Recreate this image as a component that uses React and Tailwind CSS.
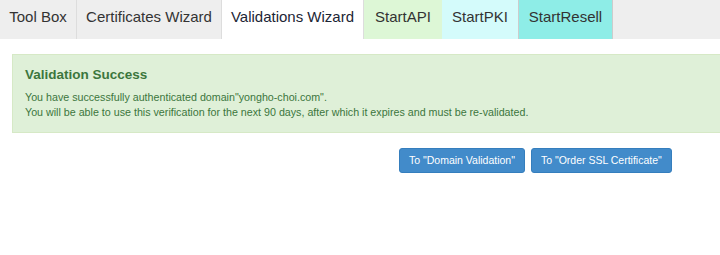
const tabs = [
  { label: "Tool Box", w: "w-[77px]", cls: "bg-[#eeeeee] border-r border-[#dddddd]" },
  { label: "Certificates Wizard", w: "w-[145px]", cls: "bg-[#eeeeee] border-r border-[#dddddd]" },
  { label: "Validations Wizard", w: "w-[142px]", cls: "bg-white text-[#1c2535] border-r border-[#dddddd]" },
  { label: "StartAPI", w: "w-[78px]", cls: "bg-[#ddf7d6]" },
  { label: "StartPKI", w: "w-[77px]", cls: "bg-[#d4fbfb] border-r border-[#cccccc]" },
  { label: "StartResell", w: "w-[94px]", cls: "bg-[#8eede7] border-r border-[#cccccc]" },
];

export default function App() {
  return (
    <div className="w-[720px] h-[255px] bg-white font-['Liberation_Sans',Arial,sans-serif] text-[#333333]">
      {/* tab strip */}
      <div className="flex h-[39px] bg-[#eeeeee]">
        {tabs.map((t) => (
          <div
            key={t.label}
            className={`${t.w} ${t.cls} flex items-center justify-center pb-[4px] text-[15px]`}
          >
            {t.label}
          </div>
        ))}
      </div>

      <div className="pl-[12px] pt-[15px]">
        <div className="bg-[#dff0d8] border border-[#d6e9c6] border-r-0 h-[79px] pl-[12px] pt-[11px] text-[#3c763d]">
          <h4 className="text-[13.5px] font-bold leading-[18px]">Validation Success</h4>
          <p className="mt-[6px] text-[10.7px] leading-[15px]">
            You have successfully authenticated domain"yongho-choi.com".
            <br />
            You will be able to use this verification for the next 90 days, after which it expires and must be re-validated.
          </p>
        </div>

        <div className="flex gap-[6px] pl-[387px] mt-[15px]">
          <button className="h-[25px] px-[9px] rounded-[3px] bg-[#428bca] border border-[#357ebd] text-white text-[10.5px]">
            To "Domain Validation"
          </button>
          <button className="h-[25px] px-[9px] rounded-[3px] bg-[#428bca] border border-[#357ebd] text-white text-[10.5px]">
            To "Order SSL Certificate"
          </button>
        </div>
      </div>
    </div>
  );
}
